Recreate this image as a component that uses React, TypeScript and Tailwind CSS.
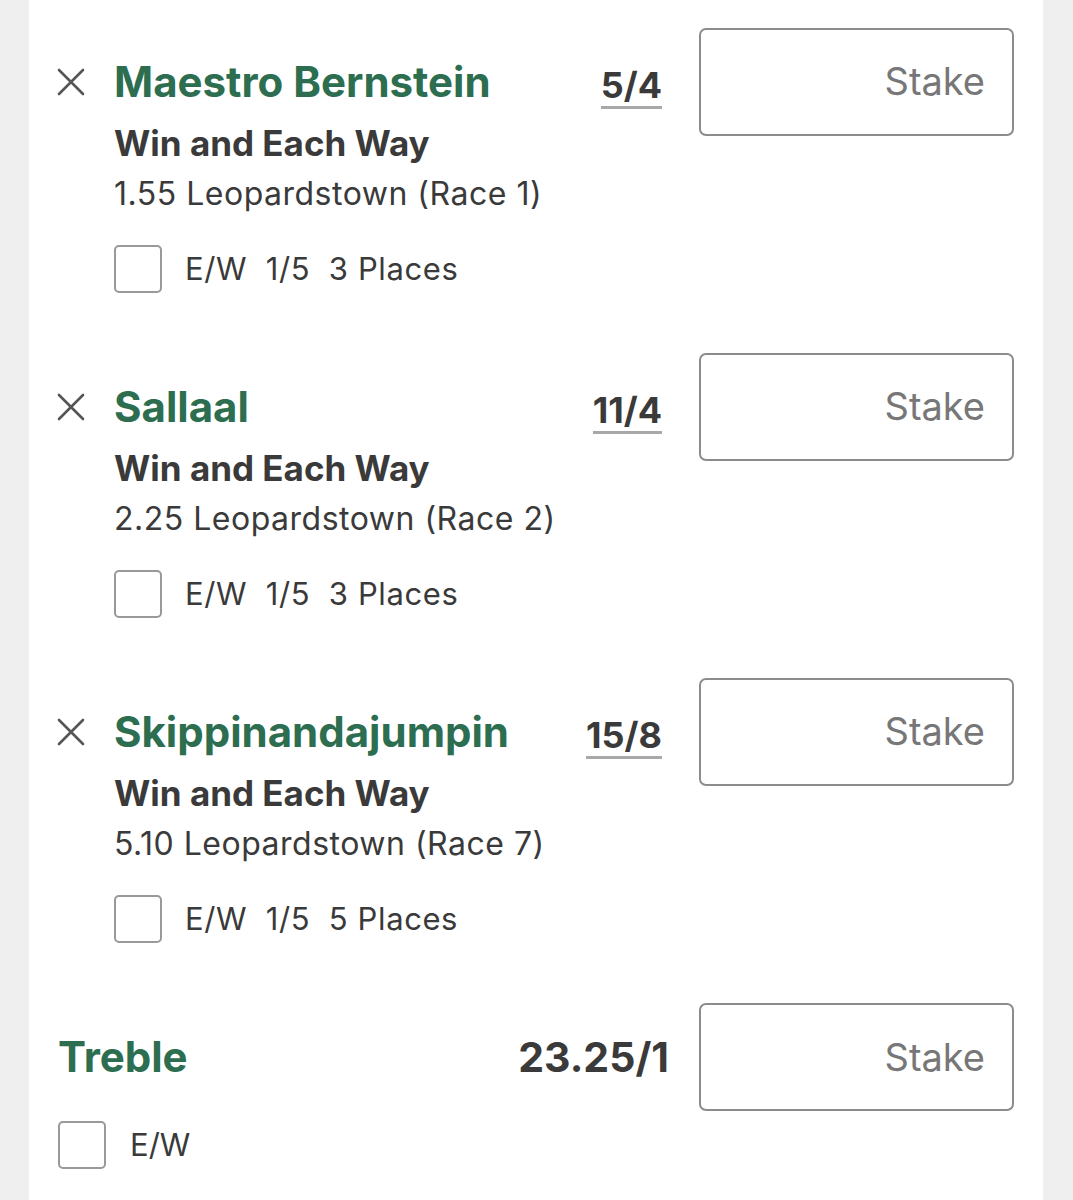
import React from "react";

interface Selection {
  name: string;
  odds: string;
  market: string;
  event: string;
  places: string;
}

const selections: Selection[] = [
  { name: "Maestro Bernstein", odds: "5/4", market: "Win and Each Way", event: "1.55 Leopardstown (Race 1)", places: "3 Places" },
  { name: "Sallaal", odds: "11/4", market: "Win and Each Way", event: "2.25 Leopardstown (Race 2)", places: "3 Places" },
  { name: "Skippinandajumpin", odds: "15/8", market: "Win and Each Way", event: "5.10 Leopardstown (Race 7)", places: "5 Places" },
];

function CloseIcon() {
  return (
    <svg width="30" height="30" viewBox="0 0 30 30" className="shrink-0">
      <path d="M3 3 L27 27 M27 3 L3 27" stroke="#555" strokeWidth="2.6" strokeLinecap="round" />
    </svg>
  );
}

function StakeBox() {
  return (
    <div className="w-[315px] h-[108px] shrink-0 rounded-[7px] border-2 border-[#8c8c8c] flex items-center justify-end pr-[27px]">
      <input
        placeholder="Stake"
        className="w-full bg-transparent text-right text-[38px] text-[#333] placeholder:text-[#777] outline-none"
      />
    </div>
  );
}

function Checkbox() {
  return <div className="w-[48px] h-[48px] shrink-0 rounded-[5px] border-2 border-[#999]" />;
}

function SelectionRow({ s }: { s: Selection }) {
  return (
    <div className="flex items-start">
      <div className="flex-1 min-w-0">
        <div className="flex items-center h-[107px]">
          <div className="w-[28px] ml-[27px] mr-[30px] flex items-center">
            <CloseIcon />
          </div>
          <span className="text-[42px] font-bold text-[#2c6e4f] leading-[40px] whitespace-nowrap">{s.name}</span>
        </div>
        <div className="pl-[85px]">
          <div className="text-[35px] font-bold text-[#3a3a3a] leading-[40px] -mt-[12px]">{s.market}</div>
          <div className="text-[32px] text-[#3a3a3a] leading-[40px] mt-[11px] tracking-[0.5px]">{s.event}</div>
          <div className="flex items-center mt-[31px]">
            <Checkbox />
            <span className="ml-[23px] text-[31px] text-[#3a3a3a] whitespace-pre tracking-[0.6px]">
              E/W  1/5  {s.places}
            </span>
          </div>
        </div>
      </div>
      <div className="flex items-center h-[107px]">
        <span className="text-[36px] font-bold text-[#3a3a3a] leading-[40px] border-b-[3px] border-[#a8a8a8] pb-[1px] mt-[10px] mr-[37px]">
          {s.odds}
        </span>
        <StakeBox />
      </div>
    </div>
  );
}

export default function App() {
  return (
    <div className="w-[1073px] h-[1200px] bg-[#efefef] overflow-hidden" style={{ fontFamily: "Inter, 'Noto Sans', sans-serif" }}>
      <div className="ml-[29px] mr-[30px] h-full bg-white pr-[29px] pt-[28px] flex flex-col gap-[60px]">
        {selections.map((s) => (
          <SelectionRow key={s.name} s={s} />
        ))}
        <div className="flex flex-col">
          <div className="flex items-center">
            <span className="flex-1 pl-[29px] text-[42px] font-bold text-[#2c6e4f] leading-[40px]">Treble</span>
            <span className="text-[41px] font-bold text-[#3a3a3a] leading-[40px] mr-[30px]">23.25/1</span>
            <StakeBox />
          </div>
          <div className="flex items-center pl-[29px] mt-[10px]">
            <Checkbox />
            <span className="ml-[24px] text-[31px] text-[#3a3a3a]">E/W</span>
          </div>
        </div>
      </div>
    </div>
  );
}
